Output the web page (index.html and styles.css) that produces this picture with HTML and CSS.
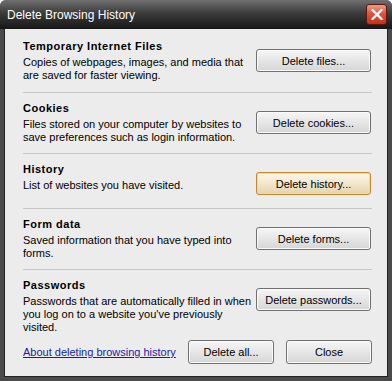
FILE: index.html
```html
<!DOCTYPE html>
<html lang="en">
<head>
    <meta charset="UTF-8">
    <title>Delete Browsing History</title>
    <link rel="stylesheet" href="styles.css">
</head>
<body>
    <div class="dialog">
        <div class="titlebar">
            <span class="title">Delete Browsing History</span>
            <button class="close-x" aria-label="Close">
                <svg width="12" height="11" viewBox="0 0 12 11">
                    <path d="M1.5 1 L10.5 10 M10.5 1 L1.5 10" stroke="#fff" stroke-width="2.4" stroke-linecap="round"/>
                </svg>
            </button>
        </div>

        <div class="content">
            <div class="section first">
                <div class="info">
                    <div class="heading">Temporary Internet Files</div>
                    <div class="desc">Copies of webpages, images, and media that<br>are saved for faster viewing.</div>
                </div>
                <button class="btn">Delete files...</button>
            </div>

            <div class="section">
                <div class="info">
                    <div class="heading">Cookies</div>
                    <div class="desc">Files stored on your computer by websites to<br>save preferences such as login information.</div>
                </div>
                <button class="btn">Delete cookies...</button>
            </div>

            <div class="section">
                <div class="info">
                    <div class="heading">History</div>
                    <div class="desc">List of websites you have visited.</div>
                </div>
                <button class="btn focus">Delete history...</button>
            </div>

            <div class="section">
                <div class="info">
                    <div class="heading">Form data</div>
                    <div class="desc">Saved information that you have typed into<br>forms.</div>
                </div>
                <button class="btn">Delete forms...</button>
            </div>

            <div class="section last">
                <div class="info">
                    <div class="heading">Passwords</div>
                    <div class="desc">Passwords that are automatically filled in when<br>you log on to a website you've previously<br>visited.</div>
                </div>
                <button class="btn">Delete passwords...</button>
            </div>

            <div class="footer">
                <a href="#" class="help-link">About deleting browsing history</a>
                <div class="footer-buttons">
                    <button class="btn small">Delete all...</button>
                    <button class="btn small">Close</button>
                </div>
            </div>
        </div>
    </div>
</body>
</html>
```

FILE: styles.css
```css
body {
    margin: 0;
    background: #ffffff;
    font-family: 'Liberation Sans', Arial, sans-serif;
    font-size: 11px;
}
.dialog {
    width: 392px;
    height: 381px;
    box-sizing: border-box;
    background: #4a4a4a;
    border-radius: 6px 6px 0 0;
    display: flex;
    flex-direction: column;
    overflow: hidden;
}
.titlebar {
    height: 29px;
    flex-shrink: 0;
    display: flex;
    align-items: center;
    justify-content: space-between;
    padding: 0 5px 0 7px;
    background: linear-gradient(#707070, #3c3c3c 45%, #161616);
}
.title {
    color: #ffffff;
    font-size: 12px;
}
.close-x {
    width: 21px;
    height: 21px;
    margin-top: -1px;
    padding: 0;
    border: 1px solid #5a1a10;
    border-radius: 3px;
    background: linear-gradient(#f29a84, #e0553c 45%, #c2301c);
    display: flex;
    align-items: center;
    justify-content: center;
}
.content {
    flex: 1;
    margin: 0 4px 4px 4px;
    background: #ececec;
    border-left: 1px solid #222;
    border-right: 1px solid #222;
    border-bottom: 1px solid #222;
    padding: 0 15px 0 18px;
    color: #000000;
}
.section {
    display: flex;
    justify-content: space-between;
    align-items: flex-start;
    padding: 9px 0 9px 0;
    border-bottom: 1px solid #c6c6c6;
}
.section.first {
    padding-top: 11px;
    padding-bottom: 10px;
}
.section.last {
    border-bottom: none;
    padding-bottom: 0;
}
.heading {
    font-weight: bold;
    letter-spacing: 0.5px;
    line-height: 13px;
    margin-bottom: 3px;
}
.desc {
    line-height: 13px;
}
.btn {
    width: 115px;
    height: 23px;
    margin: 9px 1px 4px 0;
    flex-shrink: 0;
    font-family: 'Liberation Sans', Arial, sans-serif;
    font-size: 11px;
    color: #000000;
    border: 1px solid #707070;
    border-radius: 3px;
    background: linear-gradient(#f6f6f6, #e6e6e6 50%, #d6d6d6);
    box-shadow: inset 0 0 0 1px #fbfbfb;
    padding: 0;
}
.btn.focus {
    border-color: #c8882c;
    background: linear-gradient(#fdf6e8, #f2e6cc 50%, #e6d3ad);
    box-shadow: inset 0 0 0 1px #f8d890;
}
.footer {
    display: flex;
    justify-content: space-between;
    align-items: center;
    margin-top: 6px;
}
.help-link {
    color: #1a1aa6;
    text-decoration: underline;
}
.footer-buttons {
    display: flex;
    gap: 12px;
}
.btn.small {
    width: 86px;
    height: 24px;
    margin: 0;
}
```
